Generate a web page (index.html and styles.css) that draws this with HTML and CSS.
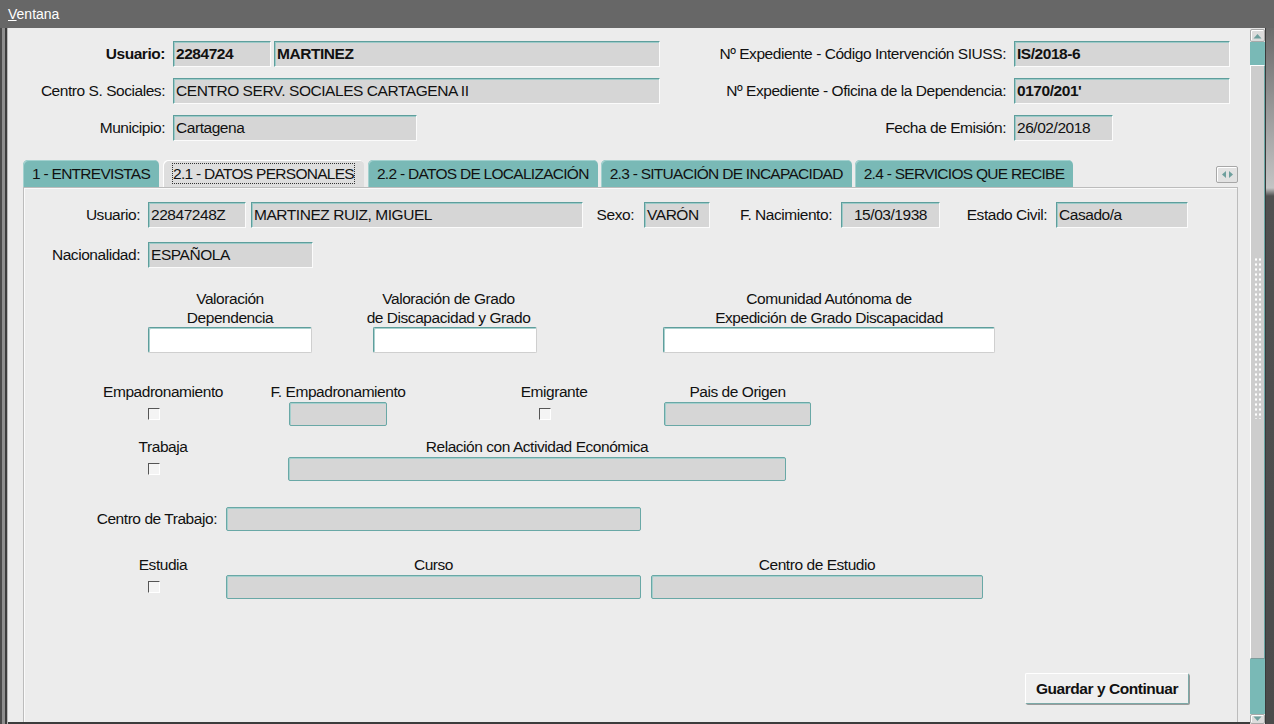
FILE: index.html
```html
<!DOCTYPE html>
<html lang="es">
<head>
    <meta charset="UTF-8">
    <title>Ventana</title>
    <link rel="stylesheet" href="styles.css">
</head>
<body>
<div class="win">
    <div class="titlebar"><u>V</u>entana</div>

    <div class="frame">
        <div class="edge-l"></div>

        <div class="canvas">
            <!-- cabecera del expediente -->
            <div class="hdr">
                <span class="lbl bold">Usuario:</span>
                <div class="pair">
                    <div class="fld bold f-cod">2284724</div>
                    <div class="fld bold f-ape">MARTINEZ</div>
                </div>
                <span class="lbl lbl-r">Nº Expediente - Código Intervención SIUSS:</span>
                <div class="fld bold">IS/2018-6</div>

                <span class="lbl">Centro S. Sociales:</span>
                <div class="fld">CENTRO SERV. SOCIALES CARTAGENA II</div>
                <span class="lbl lbl-r">Nº Expediente - Oficina de la Dependencia:</span>
                <div class="fld bold">0170/201'</div>

                <span class="lbl">Municipio:</span>
                <div class="fld f-mun">Cartagena</div>
                <span class="lbl lbl-r">Fecha de Emisión:</span>
                <div class="fld f-fecha">26/02/2018</div>
            </div>

            <div class="tabs">
                <div class="tab">1 - ENTREVISTAS</div>
                <div class="tab active"><span class="focus">2.1 - DATOS PERSONALES</span></div>
                <div class="tab">2.2 - DATOS DE LOCALIZACIÓN</div>
                <div class="tab">2.3 - SITUACIÓN DE INCAPACIDAD</div>
                <div class="tab">2.4 - SERVICIOS QUE RECIBE</div>
                <div class="tab-scroll">
                    <svg width="13" height="9" viewBox="0 0 13 9">
                        <path d="M5 1 L1 4.5 L5 8 Z" fill="#6e9f9d"/>
                        <path d="M8 1 L12 4.5 L8 8 Z" fill="#6e9f9d"/>
                    </svg>
                </div>
            </div>

            <div class="panel">
                <div class="row row-user">
                    <span class="plbl w-user">Usuario:</span>
                    <div class="fld f-nif">22847248Z</div>
                    <div class="fld f-nom">MARTINEZ RUIZ, MIGUEL</div>
                    <span class="plbl w-sexo">Sexo:</span>
                    <div class="fld f-sexo">VARÓN</div>
                    <span class="plbl w-fnac">F. Nacimiento:</span>
                    <div class="fld f-fnac">15/03/1938</div>
                    <span class="plbl w-civil">Estado Civil:</span>
                    <div class="fld f-civil">Casado/a</div>
                </div>

                <div class="row row-nac">
                    <span class="plbl w-user">Nacionalidad:</span>
                    <div class="fld f-nac">ESPAÑOLA</div>
                </div>

                <div class="row row-val">
                    <div class="grp g-valdep">
                        <div class="glbl">Valoración<br>Dependencia</div>
                        <div class="fld white"></div>
                    </div>
                    <div class="grp g-valdis">
                        <div class="glbl">Valoración de Grado<br>de Discapacidad y Grado</div>
                        <div class="fld white"></div>
                    </div>
                    <div class="grp g-ccaa">
                        <div class="glbl">Comunidad Autónoma de<br>Expedición de Grado Discapacidad</div>
                        <div class="fld white"></div>
                    </div>
                </div>

                <div class="row row-emp">
                    <div class="grp chk-grp">
                        <div class="glbl">Empadronamiento</div>
                        <div class="chk"></div>
                    </div>
                    <div class="grp g-femp">
                        <div class="glbl">F. Empadronamiento</div>
                        <div class="fld boxed"></div>
                    </div>
                    <div class="grp g-emig">
                        <div class="glbl">Emigrante</div>
                        <div class="chk"></div>
                    </div>
                    <div class="grp g-pais">
                        <div class="glbl">Pais de Origen</div>
                        <div class="fld boxed"></div>
                    </div>
                </div>

                <div class="row row-trab">
                    <div class="grp chk-grp">
                        <div class="glbl">Trabaja</div>
                        <div class="chk"></div>
                    </div>
                    <div class="grp g-rel">
                        <div class="glbl">Relación con Actividad Económica</div>
                        <div class="fld boxed"></div>
                    </div>
                </div>

                <div class="row row-ctrab">
                    <span class="plbl w-ctrab">Centro de Trabajo:</span>
                    <div class="fld boxed f-ctrab"></div>
                </div>

                <div class="row row-est">
                    <div class="grp chk-grp">
                        <div class="glbl">Estudia</div>
                        <div class="chk"></div>
                    </div>
                    <div class="grp g-curso">
                        <div class="glbl">Curso</div>
                        <div class="fld boxed"></div>
                    </div>
                    <div class="grp g-cest">
                        <div class="glbl">Centro de Estudio</div>
                        <div class="fld boxed"></div>
                    </div>
                </div>

                <div class="row row-btn">
                    <button class="btn">Guardar y Continuar</button>
                </div>
            </div>
        </div>

        <div class="vscroll">
            <div class="sb-btn">
                <svg width="9" height="6" viewBox="0 0 9 6"><path d="M0.5 5.5 L4.5 1 L8.5 5.5 Z" fill="#6e9f9d"/></svg>
            </div>
            <div class="sb-track top"></div>
            <div class="sb-thumb"><div class="sb-grip"></div></div>
            <div class="sb-track bottom"></div>
            <div class="sb-btn down">
                <svg width="9" height="6" viewBox="0 0 9 6"><path d="M0.5 0.5 L4.5 5 L8.5 0.5 Z" fill="#6e9f9d"/></svg>
            </div>
        </div>

        <div class="edge-r"></div>
    </div>
</div>
</body>
</html>
```

FILE: styles.css
```css
/* Ventana tipo Oracle Forms */
* {
    box-sizing: border-box;
}

body {
    margin: 0;
    background-color: #676767;
    font-family: "Liberation Sans", Arial, sans-serif;
    font-size: 15.5px;
    letter-spacing: -0.45px;
    color: #111;
}

.win {
    width: 1274px;
    height: 724px;
    display: flex;
    flex-direction: column;
    overflow: hidden;
}

.titlebar {
    height: 28px;
    flex-shrink: 0;
    background-color: #676767;
    color: #fff;
    font-size: 14px;
    letter-spacing: 0;
    padding: 6px 0 0 8px;
}

.frame {
    flex: 1;
    display: flex;
    min-height: 0;
}

.edge-l {
    width: 8px;
    background: linear-gradient(to right, #4b4b4b 0, #4b4b4b 2px, #8e8e8e 2px, #8e8e8e 5px, #3c3c3c 5px, #3c3c3c 7px, #b9b9b9 7px);
}

.canvas {
    width: 1242px;
    background-color: #ececec;
    border-bottom: 2px solid #3c3c3c;
    overflow: hidden;
    padding-top: 13px;
    display: flex;
    flex-direction: column;
}

.bold {
    font-weight: bold;
}

/* cabecera */
.hdr {
    display: grid;
    grid-template-columns: 157px 487px 338px 216px;
    column-gap: 8px;
    row-gap: 11px;
}

.lbl {
    text-align: right;
    line-height: 26px;
    white-space: nowrap;
}

.pair {
    display: flex;
    gap: 3px;
}

.fld {
    height: 26px;
    background-color: #d6d6d6;
    border: 1px solid;
    border-color: #5e9e9c #fbfbfb #fbfbfb #5e9e9c;
    box-shadow: inset 1px 1px 0 #9ccac8;
    padding: 0 2px;
    line-height: 24px;
    white-space: nowrap;
    overflow: hidden;
}

.f-cod { width: 98px; }
.f-ape { flex: 1; }
.f-mun { width: 244px; }
.f-fecha { width: 99px; }

/* pestañas */
.tabs {
    display: flex;
    gap: 3px;
    height: 27px;
    margin: 19px 12px 0 15px;
    flex-shrink: 0;
}

.tab {
    height: 27px;
    padding: 1px 9px 0;
    background-color: #79b9b6;
    border-radius: 5px 5px 0 0;
    box-shadow: inset 1px 1px 0 #a3d1cf;
    line-height: 26px;
    letter-spacing: -0.72px;
    white-space: nowrap;
}

.tab.active {
    background-color: #dedede;
    box-shadow: inset 1px 1px 0 #fff;
    margin: 0 1px;
}

.tab .focus {
    border: 1px dotted #333;
    padding: 1px 0;
}

.tab-scroll {
    margin: 6px 0 0 auto;
    width: 22px;
    height: 17px;
    background-color: #e2e2e2;
    border: 1px solid #a7a7a7;
    border-radius: 2px;
    box-shadow: inset 1px 1px 0 #fff;
    display: flex;
    align-items: center;
    justify-content: center;
}

.panel {
    flex: 1;
    margin: 0 12px 0 15px;
    border: 1px solid #bcbcbc;
    border-bottom: none;
    box-shadow: inset 1px 1px 0 #fafafa;
    padding-top: 14px;
}

.row {
    display: flex;
    align-items: center;
}

.plbl {
    text-align: right;
    white-space: nowrap;
    padding-right: 9px;
}

.w-user { width: 124px; padding-right: 8px; }
.w-sexo { width: 61px; padding-right: 10px; }
.w-fnac { width: 131px; }
.w-civil { width: 116px; }
.w-ctrab { width: 202px; }

.f-nif { width: 98px; }
.f-nom { width: 332px; margin-left: 5px; }
.f-sexo { width: 66px; }
.f-fnac { width: 99px; text-align: center; }
.f-civil { width: 132px; }
.f-nac { width: 165px; }
.f-ctrab { width: 415px; }

.row-nac { margin-top: 14px; }
.row-val { margin-top: 21px; align-items: flex-start; }
.row-emp { margin-top: 29px; align-items: flex-start; }
.row-trab { margin-top: 11px; align-items: flex-start; }
.row-ctrab { margin-top: 26px; }
.row-est { margin-top: 24px; align-items: flex-start; }

/* grupos con etiqueta encima */
.grp {
    display: flex;
    flex-direction: column;
}

.glbl {
    text-align: center;
    line-height: 20px;
    white-space: nowrap;
}

.row-val .glbl {
    line-height: 19px;
}

.g-valdep { width: 164px; margin-left: 124px; }
.g-valdis { width: 177px; margin-left: 48px; }
.g-valdis .fld { width: 164px; margin-left: 13px; }
.g-ccaa { width: 332px; margin-left: 126px; }

.fld.white {
    background-color: #fff;
    border-color: #5e9e9c #cfcfcf #cfcfcf #5e9e9c;
    box-shadow: inset 1px 1px 0 #a9d0ce;
    border-radius: 2px;
}

.fld.boxed {
    height: 24px;
    border: 1px solid #69a8a6;
    border-radius: 2px;
    box-shadow: inset 1px 1px 0 #a4cfcd;
}

.chk-grp { width: 120px; margin-left: 79px; }
.chk-grp .chk { margin-left: 45px; }

.chk {
    width: 12px;
    height: 12px;
    margin-top: 6px;
    background-color: #f4f4f4;
    border: 1px solid;
    border-color: #555 #fff #fff #555;
}

.g-femp { width: 140px; margin-left: 45px; }
.g-femp .fld { width: 98px; margin: 0 auto; }
.g-emig { width: 80px; margin-left: 106px; }
.g-emig .chk { margin-left: 25px; }
.g-pais { width: 147px; margin-left: 70px; }
.g-rel { width: 498px; margin-left: 65px; }
.g-curso { width: 415px; margin-left: 3px; }
.g-cest { width: 332px; margin-left: 10px; }

.row-btn {
    margin-top: 74px;
    justify-content: flex-end;
    padding-right: 48px;
}

.btn {
    width: 164px;
    height: 31px;
    font-family: inherit;
    font-size: 15.5px;
    letter-spacing: -0.45px;
    font-weight: bold;
    white-space: nowrap;
    color: #111;
    background-color: #efefef;
    border: 1px solid;
    border-color: #fff #7aa9a7 #7aa9a7 #fff;
    box-shadow: 1px 1px 0 #9a9a9a;
    border-radius: 2px;
    cursor: pointer;
}

/* barra de desplazamiento */
.vscroll {
    width: 15px;
    display: flex;
    flex-direction: column;
    padding-top: 1px;
    background-color: #e6e6e6;
}

.sb-btn {
    height: 13px;
    background-color: #dcdcdc;
    border: 1px solid #a9a9a9;
    border-radius: 2px;
    box-shadow: inset 1px 1px 0 #fff;
    display: flex;
    align-items: center;
    justify-content: center;
}

.sb-btn.down {
    flex: 1;
}

.sb-track {
    background-color: #79b9b6;
}

.sb-track.top { height: 23px; }
.sb-track.bottom { height: 55px; }

.sb-thumb {
    height: 594px;
    background-color: #cdcdcd;
    border: 1px solid;
    border-color: #fff #6aa6a4 #7c9c9b #fff;
    display: flex;
    align-items: center;
    justify-content: center;
}

.sb-grip {
    width: 8px;
    height: 162px;
    margin-top: -48px;
    background-image: radial-gradient(circle, #fff 0, #fff 1px, transparent 1.3px);
    background-size: 4px 5px;
}

.edge-r {
    width: 9px;
    background: linear-gradient(to bottom, #6a6a6a 0, #a9a9a9 110px, #c4c4c4 160px, #505050 168px, #4b4b4b 100%);
    border-left: 1px solid #3a3a3a;
}
```
